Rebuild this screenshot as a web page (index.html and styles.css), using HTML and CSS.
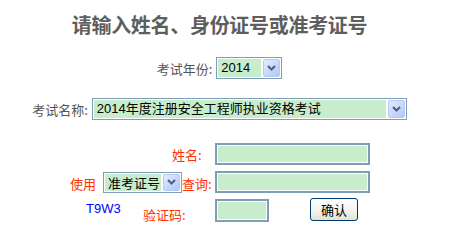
FILE: index.html
```html
<!DOCTYPE html>
<html lang="zh-CN">
<head>
<meta charset="utf-8">
<title>成绩查询</title>
<link rel="stylesheet" href="styles.css">
</head>
<body>
<div class="page">
  <h1 class="title">请输入姓名、身份证号或准考证号</h1>

  <div class="row row-year">
    <span class="label">考试年份:</span>
    <div class="combo combo-year">
      <select class="combo-select"><option>2014</option></select>
      <span class="drop"><svg width="9" height="6" viewBox="0 0 9 6"><polyline points="1,1 4.5,4.5 8,1" fill="none" stroke="#4a5f86" stroke-width="2"/></svg></span>
    </div>
  </div>

  <div class="row row-exam">
    <span class="label">考试名称:</span>
    <div class="combo combo-exam">
      <select class="combo-select"><option>2014年度注册安全工程师执业资格考试</option></select>
      <span class="drop"><svg width="9" height="6" viewBox="0 0 9 6"><polyline points="1,1 4.5,4.5 8,1" fill="none" stroke="#4a5f86" stroke-width="2"/></svg></span>
    </div>
  </div>

  <div class="row row-name">
    <span class="red-label name-label">姓名:</span>
    <input class="field field-wide" type="text">
  </div>

  <div class="row row-use">
    <span class="red-label use-label">使用</span>
    <div class="combo combo-type">
      <select class="combo-select"><option>准考证号</option></select>
      <span class="drop"><svg width="9" height="6" viewBox="0 0 9 6"><polyline points="1,1 4.5,4.5 8,1" fill="none" stroke="#4a5f86" stroke-width="2"/></svg></span>
    </div>
    <span class="red-label query-label">查询:</span>
    <input class="field field-wide" type="text">
  </div>

  <div class="row row-code">
    <span class="captcha">T9W3</span>
    <span class="red-label code-label">验证码:</span>
    <input class="field field-code" type="text">
    <button class="btn" type="button">确认</button>
  </div>
</div>
</body>
</html>
```

FILE: styles.css
```css
html, body {
  margin: 0;
  padding: 0;
  background: #ffffff;
}

body {
  font-family: "Noto Sans CJK SC", "Liberation Sans", sans-serif;
  font-size: 13px;
  color: #000;
}

.page {
  width: 439px;
}

.title {
  margin: 0;
  height: 50px;
  line-height: 50px;
  text-align: center;
  font-size: 20px;
  font-weight: bold;
  color: #5e5e5e;
  letter-spacing: -0.3px;
}

.row {
  display: flex;
  align-items: center;
}

.row-year {
  justify-content: center;
  margin-top: 7px;
  height: 22px;
}

.row-exam {
  justify-content: center;
  margin-top: 19px;
  height: 22px;
}

.label {
  font-size: 13px;
  color: #555;
  margin-right: 4px;
}

.combo {
  display: flex;
  box-sizing: border-box;
  height: 22px;
  padding: 1px;
  border: 1px solid #7f9db9;
  background: #fff;
}

.combo-select {
  appearance: none;
  -webkit-appearance: none;
  border: 0;
  margin: 0;
  padding: 0 0 0 3px;
  height: 18px;
  line-height: 18px;
  background: #c7edcc;
  color: #000;
  font-family: "Liberation Sans", "Noto Sans CJK SC", sans-serif;
  font-size: 13px;
  outline: none;
}

.combo-year .combo-select { width: 43px; }
.combo-exam .combo-select { width: 292px; }
.combo-type .combo-select { width: 56px; font-family: "Noto Sans CJK SC", sans-serif; }

.drop {
  box-sizing: border-box;
  width: 17px;
  height: 18px;
  margin-left: 2px;
  border: 1px solid #b6c9f2;
  border-radius: 2px;
  background: linear-gradient(135deg, #e4ecfe 0%, #c7d7fb 55%, #b3c7f5 100%);
  display: flex;
  align-items: center;
  justify-content: center;
}

.drop svg { display: block; }

.red-label {
  color: #ff3300;
  font-size: 13px;
}

.row-name {
  margin-top: 23px;
  height: 22px;
}

.name-label {
  margin-left: 172px;
  width: 43px;
}

.row-use {
  margin-top: 6px;
  height: 22px;
}

.use-label {
  margin-left: 70px;
  width: 33px;
  padding-top: 3px;
}

.combo-type {
  width: 79px;
  height: 21px;
}

.combo-type .combo-select,
.combo-type .drop {
  height: 17px;
}

.query-label {
  width: 33px;
  padding-top: 2px;
}

.field {
  box-sizing: border-box;
  margin: 0;
  padding: 0;
  border: 2px solid #7f9db9;
  box-shadow: inset 0 0 0 1px #fff;
  background: #c7edcc;
  height: 22px;
  outline: none;
}

.field-wide { width: 155px; }

.row-code {
  margin-top: 5px;
  height: 24px;
}

.captcha {
  margin-left: 86px;
  width: 57px;
  color: #0000ff;
  font-family: "Liberation Sans", sans-serif;
  font-size: 13px;
  padding-bottom: 3px;
}

.code-label {
  width: 72px;
  padding-top: 8px;
}

.field-code {
  width: 54px;
  height: 23px;
  align-self: flex-end;
}

.btn {
  box-sizing: border-box;
  margin: 0 0 0 41px;
  width: 48px;
  height: 23px;
  padding: 0;
  border: 1px solid #003c74;
  border-radius: 3px;
  background: linear-gradient(#ffffff 0%, #f3f2ec 60%, #e3e1d4 100%);
  font-family: "Noto Sans CJK SC", sans-serif;
  font-size: 13px;
  color: #000;
  align-self: flex-start;
}
```
